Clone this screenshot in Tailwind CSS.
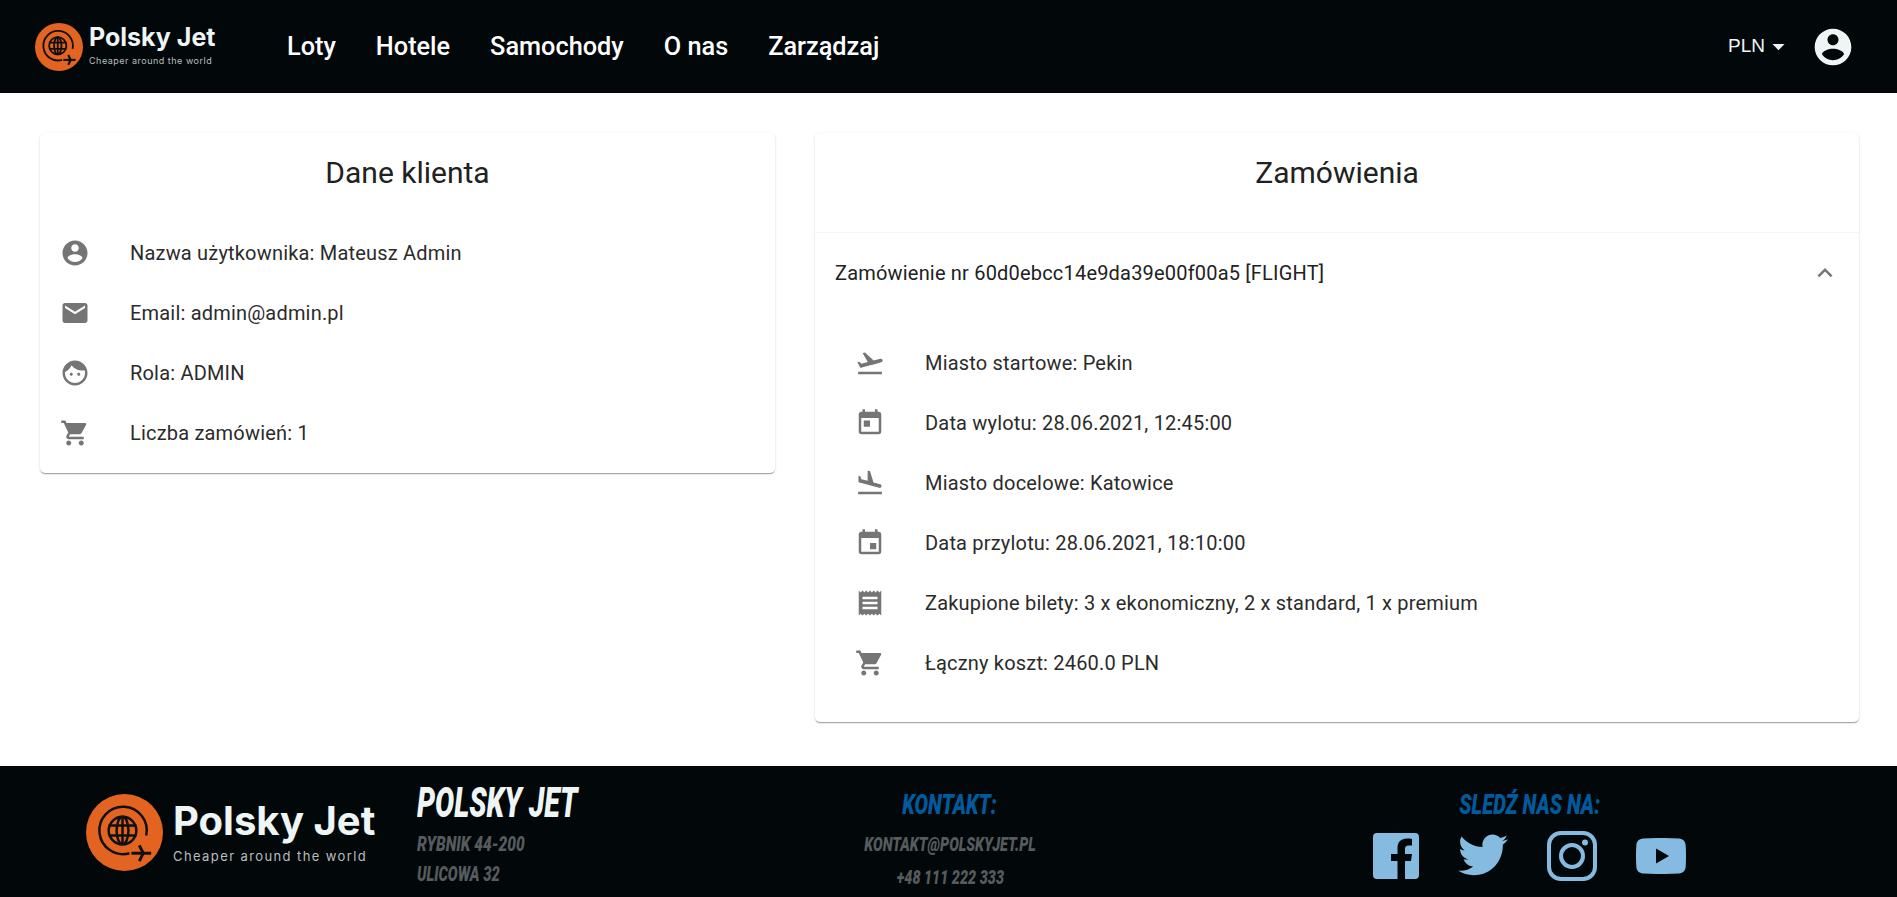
<!DOCTYPE html>
<html lang="pl">

<head>
    <meta charset="UTF-8">
    <meta name="viewport" content="width=device-width, initial-scale=1.0">
    <title>Polsky Jet</title>
    <script src="https://cdn.jsdelivr.net/npm/@tailwindcss/browser@4"></script>
</head>

<body class="h-screen flex flex-col overflow-hidden bg-white font-['Roboto',sans-serif] text-[#212121]">
    <!-- top bar -->
    <header class="h-[93px] shrink-0 flex items-center bg-[#02070a] text-white pl-[35px] pr-[42px]">
        <div class="flex items-center gap-[6px] w-[252px]">
            <svg class="w-[48px] h-[48px] shrink-0" viewBox="0 0 78 78">
                <circle cx="39" cy="39" r="39" fill="#e36420" />
                <g fill="none" stroke="#101010" stroke-width="3">
                    <path d="M44 60A24 24 0 1 1 61 42" />
                    <circle cx="37" cy="37" r="14" />
                    <ellipse cx="37" cy="37" rx="6" ry="14" />
                    <path d="M23 32h28M23 42h28M37 23v28" />
                    <path d="M46 60h20" stroke-width="3.5" />
                    <path d="M54 52l4 8-4 8" stroke-width="3.5" />
                </g>
            </svg>
            <div class="flex flex-col font-['Inter',sans-serif] text-[#eef5f5] -mt-[4px]">
                <span class="text-[25px] leading-[28px] font-bold">Polsky Jet</span>
                <span class="text-[9px] leading-[12px] tracking-[.5px] text-[#b9bfbf] mt-[4px]">Cheaper around the world</span>
            </div>
        </div>
        <nav class="flex items-center gap-[40px] text-[25.3px] font-medium">
            <a>Loty</a>
            <a>Hotele</a>
            <a>Samochody</a>
            <a>O nas</a>
            <a>Zarządzaj</a>
        </nav>
        <div class="ml-auto flex items-center">
            <span class="text-[19px] text-[#eef5f5] font-['Liberation_Sans',sans-serif]">PLN</span>
            <svg class="w-[29px] h-[29px] ml-[-1px] fill-[#eef5f5]" viewBox="0 0 24 24"><path d="M7 10l5 5 5-5z" /></svg>
            <svg class="w-[44px] h-[44px] ml-[18px] fill-[#eef5f5]" viewBox="0 0 24 24"><path d="M12 2C6.48 2 2 6.48 2 12s4.48 10 10 10 10-4.48 10-10S17.52 2 12 2zm0 3c1.66 0 3 1.34 3 3s-1.34 3-3 3-3-1.34-3-3 1.34-3 3-3zm0 14.2c-2.5 0-4.71-1.28-6-3.22.03-1.99 4-3.08 6-3.08 1.99 0 5.97 1.09 6 3.08-1.29 1.94-3.5 3.22-6 3.22z" /></svg>
        </div>
    </header>

    <main class="flex-1 grid grid-cols-[735px_1044px] gap-[40px] items-start pl-[40px] pt-[40px]">
        <!-- customer data -->
        <section class="h-[340px] rounded-[5px] bg-white shadow-[0_2px_1px_-1px_rgba(0,0,0,.2),0_1px_1px_0_rgba(0,0,0,.14),0_1px_3px_0_rgba(0,0,0,.12)]">
            <h2 class="h-[80px] flex items-center justify-center text-[30px] leading-none">Dane klienta</h2>
            <ul class="flex flex-col pt-[10px] text-[20px] tracking-[.19px] text-[#2b2b2b]">
                <li class="h-[60px] flex items-center pl-[20px]">
                    <svg class="w-[30px] h-[30px] mr-[40px] fill-[#757575]" viewBox="0 0 24 24"><path d="M12 2C6.48 2 2 6.48 2 12s4.48 10 10 10 10-4.48 10-10S17.52 2 12 2zm0 3c1.66 0 3 1.34 3 3s-1.34 3-3 3-3-1.34-3-3 1.34-3 3-3zm0 14.2c-2.5 0-4.71-1.28-6-3.22.03-1.99 4-3.08 6-3.08 1.99 0 5.97 1.09 6 3.08-1.29 1.94-3.5 3.22-6 3.22z" /></svg>
                    Nazwa użytkownika: Mateusz Admin
                </li>
                <li class="h-[60px] flex items-center pl-[20px]">
                    <svg class="w-[30px] h-[30px] mr-[40px] fill-[#757575]" viewBox="0 0 24 24"><path d="M20 4H4c-1.1 0-1.99.9-1.99 2L2 18c0 1.1.9 2 2 2h16c1.1 0 2-.9 2-2V6c0-1.1-.9-2-2-2zm0 4l-8 5-8-5V6l8 5 8-5v2z" /></svg>
                    Email: admin@admin.pl
                </li>
                <li class="h-[60px] flex items-center pl-[20px]">
                    <svg class="w-[30px] h-[30px] mr-[40px] fill-[#757575]" viewBox="0 0 24 24"><path d="M9 11.75c-.69 0-1.25.56-1.25 1.25s.56 1.25 1.25 1.25 1.25-.56 1.25-1.25-.56-1.25-1.25-1.25zm6 0c-.69 0-1.25.56-1.25 1.25s.56 1.25 1.25 1.25 1.25-.56 1.25-1.25-.56-1.25-1.25-1.25zM12 2C6.48 2 2 6.48 2 12s4.48 10 10 10 10-4.48 10-10S17.52 2 12 2zm0 18c-4.41 0-8-3.59-8-8 0-.29.02-.58.05-.86 2.36-1.05 4.23-2.98 5.21-5.37C11.07 8.33 14.05 10 17.42 10c.78 0 1.53-.09 2.25-.26.21.71.33 1.47.33 2.26 0 4.41-3.59 8-8 8z" /></svg>
                    Rola: ADMIN
                </li>
                <li class="h-[60px] flex items-center pl-[20px]">
                    <svg class="w-[30px] h-[30px] mr-[40px] fill-[#757575]" viewBox="0 0 24 24"><path d="M7 18c-1.1 0-1.99.9-1.99 2S5.9 22 7 22s2-.9 2-2-.9-2-2-2zM1 2v2h2l3.6 7.59-1.35 2.45c-.16.28-.25.61-.25.96 0 1.1.9 2 2 2h12v-2H7.42c-.14 0-.25-.11-.25-.25l.03-.12.9-1.63h7.45c.75 0 1.41-.41 1.75-1.03l3.58-6.49c.08-.14.12-.31.12-.48 0-.55-.45-1-1-1H5.21l-.94-2H1zm16 16c-1.1 0-1.99.9-1.99 2s.89 2 1.99 2 2-.9 2-2-.9-2-2-2z" /></svg>
                    Liczba zamówień: 1
                </li>
            </ul>
        </section>

        <!-- orders -->
        <section class="h-[589px] rounded-[5px] bg-white shadow-[0_2px_1px_-1px_rgba(0,0,0,.2),0_1px_1px_0_rgba(0,0,0,.14),0_1px_3px_0_rgba(0,0,0,.12)]">
            <h2 class="h-[80px] mb-[19px] flex items-center justify-center text-[30px] leading-none">Zamówienia</h2>
            <div class="h-[80px] border-t border-[#f5f5f5] flex items-center justify-between pl-[20px] pr-[19px] text-[20px] tracking-[.19px]">
                <span>Zamówienie nr 60d0ebcc14e9da39e00f00a5 [FLIGHT]</span>
                <svg class="w-[30px] h-[30px] fill-[#757575]" viewBox="0 0 24 24"><path d="M12 8l-6 6 1.41 1.41L12 10.83l4.59 4.58L18 14z" /></svg>
            </div>
            <ul class="flex flex-col pt-[21px] text-[20px] tracking-[.19px] text-[#2b2b2b]">
                <li class="h-[60px] flex items-center pl-[40px]">
                    <svg class="w-[30px] h-[30px] mr-[40px] fill-[#757575]" viewBox="0 0 24 24"><path d="M2.5 19h19v2h-19zm19.57-9.36c-.21-.8-1.04-1.28-1.84-1.06L14.92 10l-6.9-6.43-1.93.51 4.14 7.17-4.97 1.33-1.97-1.54-1.45.39 1.82 3.16.77 1.33 1.6-.43 5.31-1.42 4.35-1.16L21 11.49c.81-.23 1.28-1.05 1.07-1.85z" /></svg>
                    Miasto startowe: Pekin
                </li>
                <li class="h-[60px] flex items-center pl-[40px]">
                    <svg class="w-[30px] h-[30px] mr-[40px] fill-[#757575]" viewBox="0 0 24 24"><path d="M19 3h-1V1h-2v2H8V1H6v2H5c-1.11 0-1.99.9-1.99 2L3 19c0 1.1.89 2 2 2h14c1.1 0 2-.9 2-2V5c0-1.1-.9-2-2-2zm0 16H5V8h14v11zM7 10h5v5H7z" /></svg>
                    Data wylotu: 28.06.2021, 12:45:00
                </li>
                <li class="h-[60px] flex items-center pl-[40px]">
                    <svg class="w-[30px] h-[30px] mr-[40px] fill-[#757575]" viewBox="0 0 24 24"><path d="M2.5 19h19v2h-19zm7.18-5.73l4.35 1.16 5.31 1.42c.8.21 1.62-.26 1.84-1.06.21-.8-.26-1.62-1.06-1.84l-5.31-1.42-2.76-9.02L10.12 2v8.28L5.15 8.95l-.93-2.32-1.45-.39v5.17l1.6.43 5.31 1.43z" /></svg>
                    Miasto docelowe: Katowice
                </li>
                <li class="h-[60px] flex items-center pl-[40px]">
                    <svg class="w-[30px] h-[30px] mr-[40px] fill-[#757575]" viewBox="0 0 24 24"><path d="M17 12h-5v5h5v-5zM16 1v2H8V1H6v2H5c-1.11 0-1.99.9-1.99 2L3 19c0 1.1.89 2 2 2h14c1.1 0 2-.9 2-2V5c0-1.1-.9-2-2-2h-1V1h-2zm3 18H5V8h14v11z" /></svg>
                    Data przylotu: 28.06.2021, 18:10:00
                </li>
                <li class="h-[60px] flex items-center pl-[40px]">
                    <svg class="w-[30px] h-[30px] mr-[40px] fill-[#757575]" viewBox="0 0 24 24"><path d="M18 17H6v-2h12v2zm0-4H6v-2h12v2zm0-4H6V7h12v2zM3 22l1.5-1.5L6 22l1.5-1.5L9 22l1.5-1.5L12 22l1.5-1.5L15 22l1.5-1.5L18 22l1.5-1.5L21 22V2l-1.5 1.5L18 2l-1.5 1.5L15 2l-1.5 1.5L12 2l-1.5 1.5L9 2 7.5 3.5 6 2 4.5 3.5 3 2v20z" /></svg>
                    Zakupione bilety: 3 x ekonomiczny, 2 x standard, 1 x premium
                </li>
                <li class="h-[60px] flex items-center pl-[40px]">
                    <svg class="w-[30px] h-[30px] mr-[40px] fill-[#757575]" viewBox="0 0 24 24"><path d="M7 18c-1.1 0-1.99.9-1.99 2S5.9 22 7 22s2-.9 2-2-.9-2-2-2zM1 2v2h2l3.6 7.59-1.35 2.45c-.16.28-.25.61-.25.96 0 1.1.9 2 2 2h12v-2H7.42c-.14 0-.25-.11-.25-.25l.03-.12.9-1.63h7.45c.75 0 1.41-.41 1.75-1.03l3.58-6.49c.08-.14.12-.31.12-.48 0-.55-.45-1-1-1H5.21l-.94-2H1zm16 16c-1.1 0-1.99.9-1.99 2s.89 2 1.99 2 2-.9 2-2-.9-2-2-2z" /></svg>
                    Łączny koszt: 2460.0 PLN
                </li>
            </ul>
        </section>
    </main>

    <!-- footer -->
    <footer class="h-[131px] shrink-0 bg-[#02070a] flex items-start pl-[86px] overflow-hidden">
        <div class="flex items-center gap-[10px] w-[331px] pt-[28px]">
            <svg class="w-[77px] h-[77px] shrink-0" viewBox="0 0 78 78">
                <circle cx="39" cy="39" r="39" fill="#e36420" />
                <g fill="none" stroke="#101010" stroke-width="2.5">
                    <path d="M44 60A24 24 0 1 1 61 42" />
                    <circle cx="37" cy="37" r="14" />
                    <ellipse cx="37" cy="37" rx="6" ry="14" />
                    <path d="M23 32h28M23 42h28M37 23v28" />
                    <path d="M46 60h20" stroke-width="3" />
                    <path d="M54 52l4 8-4 8" stroke-width="3" />
                </g>
            </svg>
            <div class="flex flex-col font-['Inter',sans-serif] text-[#eef5f5] -mt-[3px]">
                <span class="text-[40px] leading-[44px] font-bold">Polsky Jet</span>
                <span class="text-[13px] leading-[16px] tracking-[1.4px] text-[#b9bfbf] mt-[5px]">Cheaper around the world</span>
            </div>
        </div>
        <div class="w-[380px] flex flex-col items-start pt-[15px] italic font-black uppercase">
            <span class="text-[42px] leading-[44px] text-[#eef5f5] origin-left scale-x-[.68] whitespace-nowrap">Polsky Jet</span>
            <span class="text-[21px] leading-[30px] mt-[4px] text-[#555b5e] origin-left scale-x-[.74] whitespace-nowrap">Rybnik 44-200</span>
            <span class="text-[21px] leading-[30px] text-[#555b5e] origin-left scale-x-[.7] whitespace-nowrap">Ulicowa 32</span>
        </div>
        <div class="w-[320px] flex flex-col items-center pt-[22px] ml-[-7px] italic font-black uppercase">
            <span class="text-[28px] leading-[34px] text-[#005a9c] scale-x-[.72] whitespace-nowrap">Kontakt:</span>
            <span class="text-[20px] leading-[30px] mt-[7px] text-[#555b5e] scale-x-[.72] whitespace-nowrap">kontakt@polskyjet.pl</span>
            <span class="text-[20px] leading-[30px] mt-[3px] text-[#555b5e] scale-x-[.72] whitespace-nowrap">+48 111 222 333</span>
        </div>
        <div class="flex flex-col items-center pt-[22px] ml-[263px]">
            <span class="text-[28px] leading-[34px] italic font-black uppercase text-[#005a9c] scale-x-[.72] whitespace-nowrap">Sledź nas na:</span>
            <div class="flex items-center gap-[39px] mt-[9px] fill-[#85bbe0]">
                <svg class="w-[46px] h-[46px]" viewBox="0 0 46 46"><path d="M4 0h38a4 4 0 0 1 4 4v38a4 4 0 0 1-4 4H32V28h6l1-7h-7v-5c0-2 1-3.500 3.500-3.500H39V6c-1-.2-3-.4-5-.4-6 0-9.500 3.500-9.500 9.500V21H18v7h6.500v18H4a4 4 0 0 1-4-4V4a4 4 0 0 1 4-4z" /></svg>
                <svg class="w-[50px] h-[44px]" viewBox="0 0 24 21"><path d="M24 2.500c-.9.400-1.800.7-2.800.8 1-.6 1.800-1.600 2.200-2.700-1 .6-2 1-3.100 1.200C19.300.8 18 .2 16.600.2c-2.700 0-4.900 2.200-4.900 4.900 0 .4 0 .8.100 1.100C7.700 6 4.100 4.100 1.700 1.100c-.4.700-.7 1.600-.7 2.500 0 1.700.9 3.200 2.200 4.100-.8 0-1.600-.2-2.200-.6v.1c0 2.400 1.700 4.400 3.900 4.800-.4.100-.8.200-1.300.2-.3 0-.6 0-.9-.1.600 2 2.400 3.400 4.600 3.400-1.700 1.300-3.800 2.100-6.100 2.100-.4 0-.8 0-1.200-.1 2.200 1.400 4.800 2.200 7.500 2.200 9.100 0 14-7.500 14-14v-.6c1-.7 1.800-1.600 2.500-2.600z" /></svg>
                <svg class="w-[50px] h-[50px]" viewBox="0 0 50 50"><path fill-rule="evenodd" d="M14 0h22a14 14 0 0 1 14 14v22a14 14 0 0 1-14 14H14A14 14 0 0 1 0 36V14A14 14 0 0 1 14 0zm0 4A10 10 0 0 0 4 14v22a10 10 0 0 0 10 10h22a10 10 0 0 0 10-10V14A10 10 0 0 0 36 4zm11 8a13 13 0 1 1 0 26 13 13 0 0 1 0-26zm0 4a9 9 0 1 0 0 18 9 9 0 0 0 0-18zm13-7.500a3 3 0 1 1 0 6 3 3 0 0 1 0-6z" /></svg>
                <svg class="w-[50px] h-[36px]" viewBox="0 0 50 36"><path fill-rule="evenodd" d="M7 0.500C18 -.2 32 -.2 43 .5c4 .3 6.500 3 6.700 7 .4 7 .4 14 0 21-.2 4-2.700 6.700-6.700 7-11 .7-25 .7-36 0-4-.3-6.500-3-6.700-7-.4-7-.4-14 0-21C.500 3.500 3 .8 7 .5zM20 10.500v15l13-7.500z" /></svg>
            </div>
        </div>
    </footer>
</body>

</html>
